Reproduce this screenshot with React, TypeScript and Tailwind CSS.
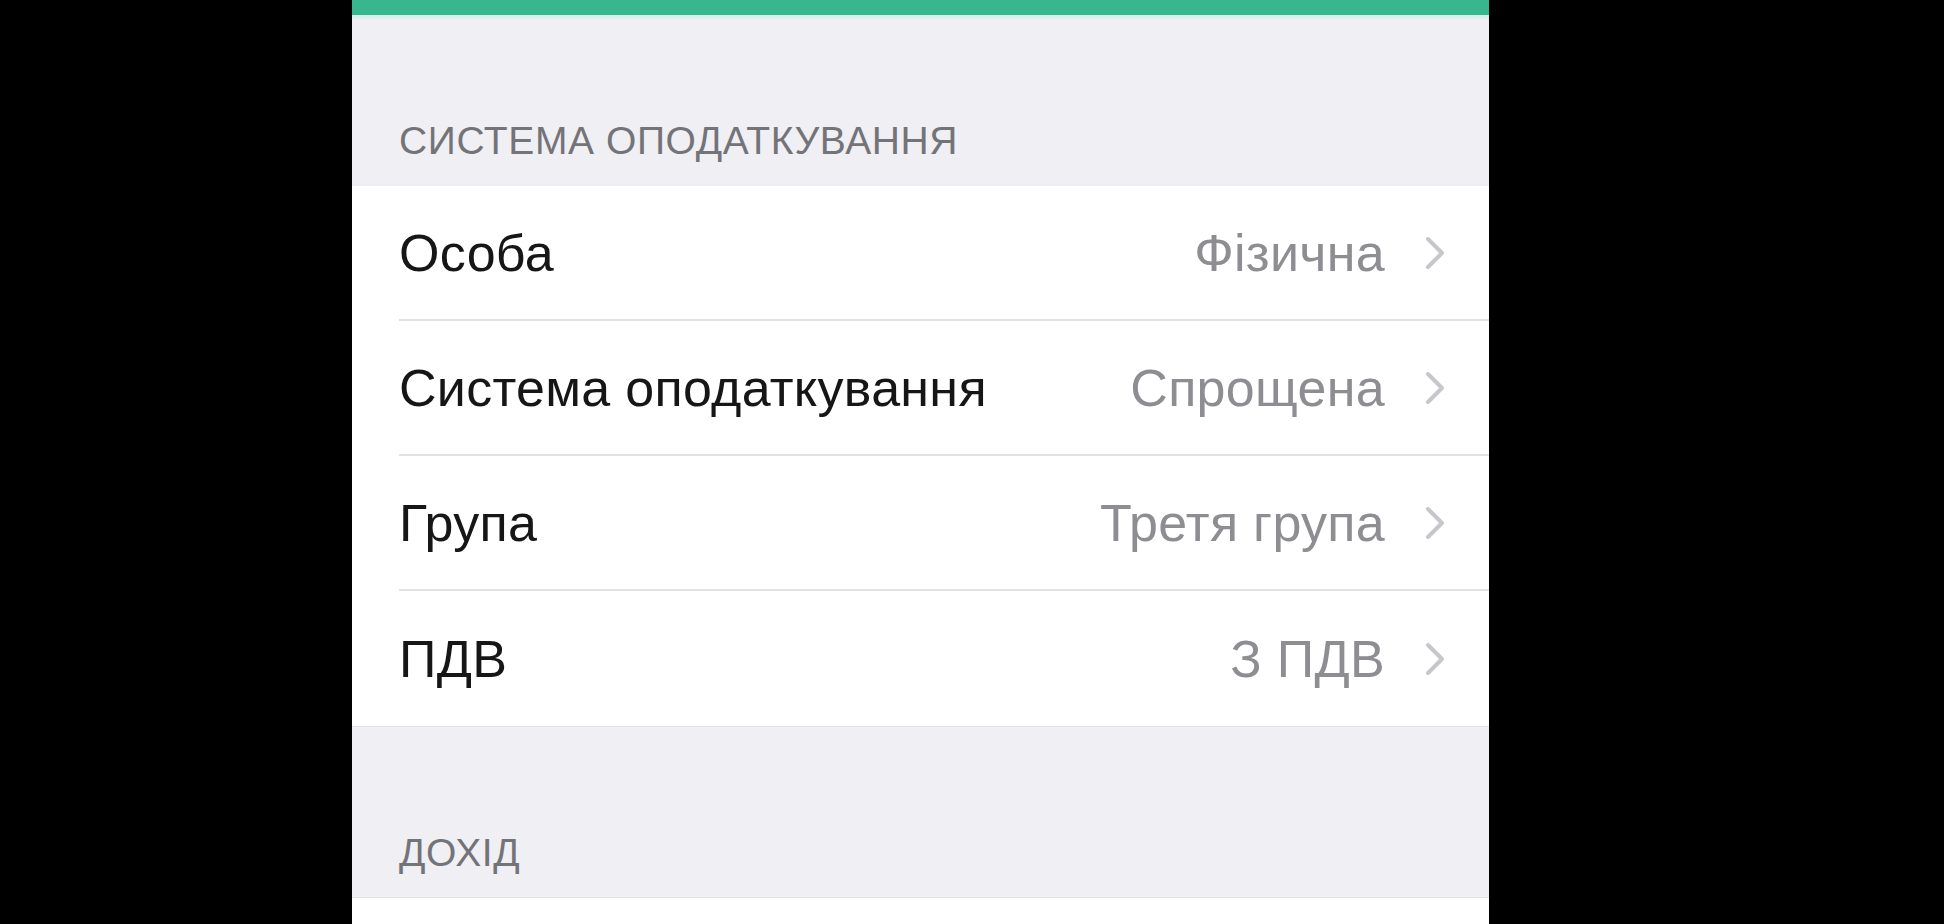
import React from "react";

const rows = [
  { label: "Особа", value: "Фізична" },
  { label: "Система оподаткування", value: "Спрощена" },
  { label: "Група", value: "Третя група" },
  { label: "ПДВ", value: "З ПДВ" },
];

function Chevron() {
  return (
    <svg width="24" height="34" viewBox="0 0 24 34" className="shrink-0">
      <polyline
        points="5,3 19,17 5,31"
        fill="none"
        stroke="#c6c6cb"
        strokeWidth="4"
        strokeLinecap="round"
        strokeLinejoin="round"
      />
    </svg>
  );
}

export default function App() {
  return (
    <div
      className="w-[1944px] h-[924px] bg-black flex overflow-hidden"
      style={{ fontFamily: '"Liberation Sans", Arial, sans-serif' }}
    >
      <div className="w-[352px] shrink-0" />
      <div className="w-[1137px] shrink-0 flex flex-col bg-[#efeff4]">
        <div className="h-[15px] bg-[#38b78e]" />
        <div className="h-[5px] bg-gradient-to-b from-[#cdeee0] to-[#efeff4]" />
        <div className="h-[166px] flex items-end pl-[47px] pb-[26px]">
          <span className="text-[39px] leading-[39px] text-[#737378] tracking-[0.6px]">
            СИСТЕМА ОПОДАТКУВАННЯ
          </span>
        </div>
        <div className="bg-white">
          {rows.map((r, i) => (
            <div key={r.label} className="pl-[47px]">
              <div
                className={`h-[135px] flex items-center pr-[42px] ${
                  i < rows.length - 1 ? "border-b-2 border-[#e2e2e6]" : ""
                }`}
              >
                <span className="text-[52px] text-[#161616] flex-1 tracking-[0.3px]">{r.label}</span>
                <span className="text-[52px] text-[#8d8d92] mr-[38px] tracking-[0.3px]">{r.value}</span>
                <Chevron />
              </div>
            </div>
          ))}
        </div>
        <div className="h-[171px] flex items-end pl-[47px] pb-[25px] border-t border-[#e3e3e8]">
          <span className="text-[39px] leading-[39px] text-[#737378] tracking-[0.6px]">ДОХІД</span>
        </div>
        <div className="flex-1 bg-white border-t border-[#e3e3e8]" />
      </div>
      <div className="flex-1" />
    </div>
  );
}
